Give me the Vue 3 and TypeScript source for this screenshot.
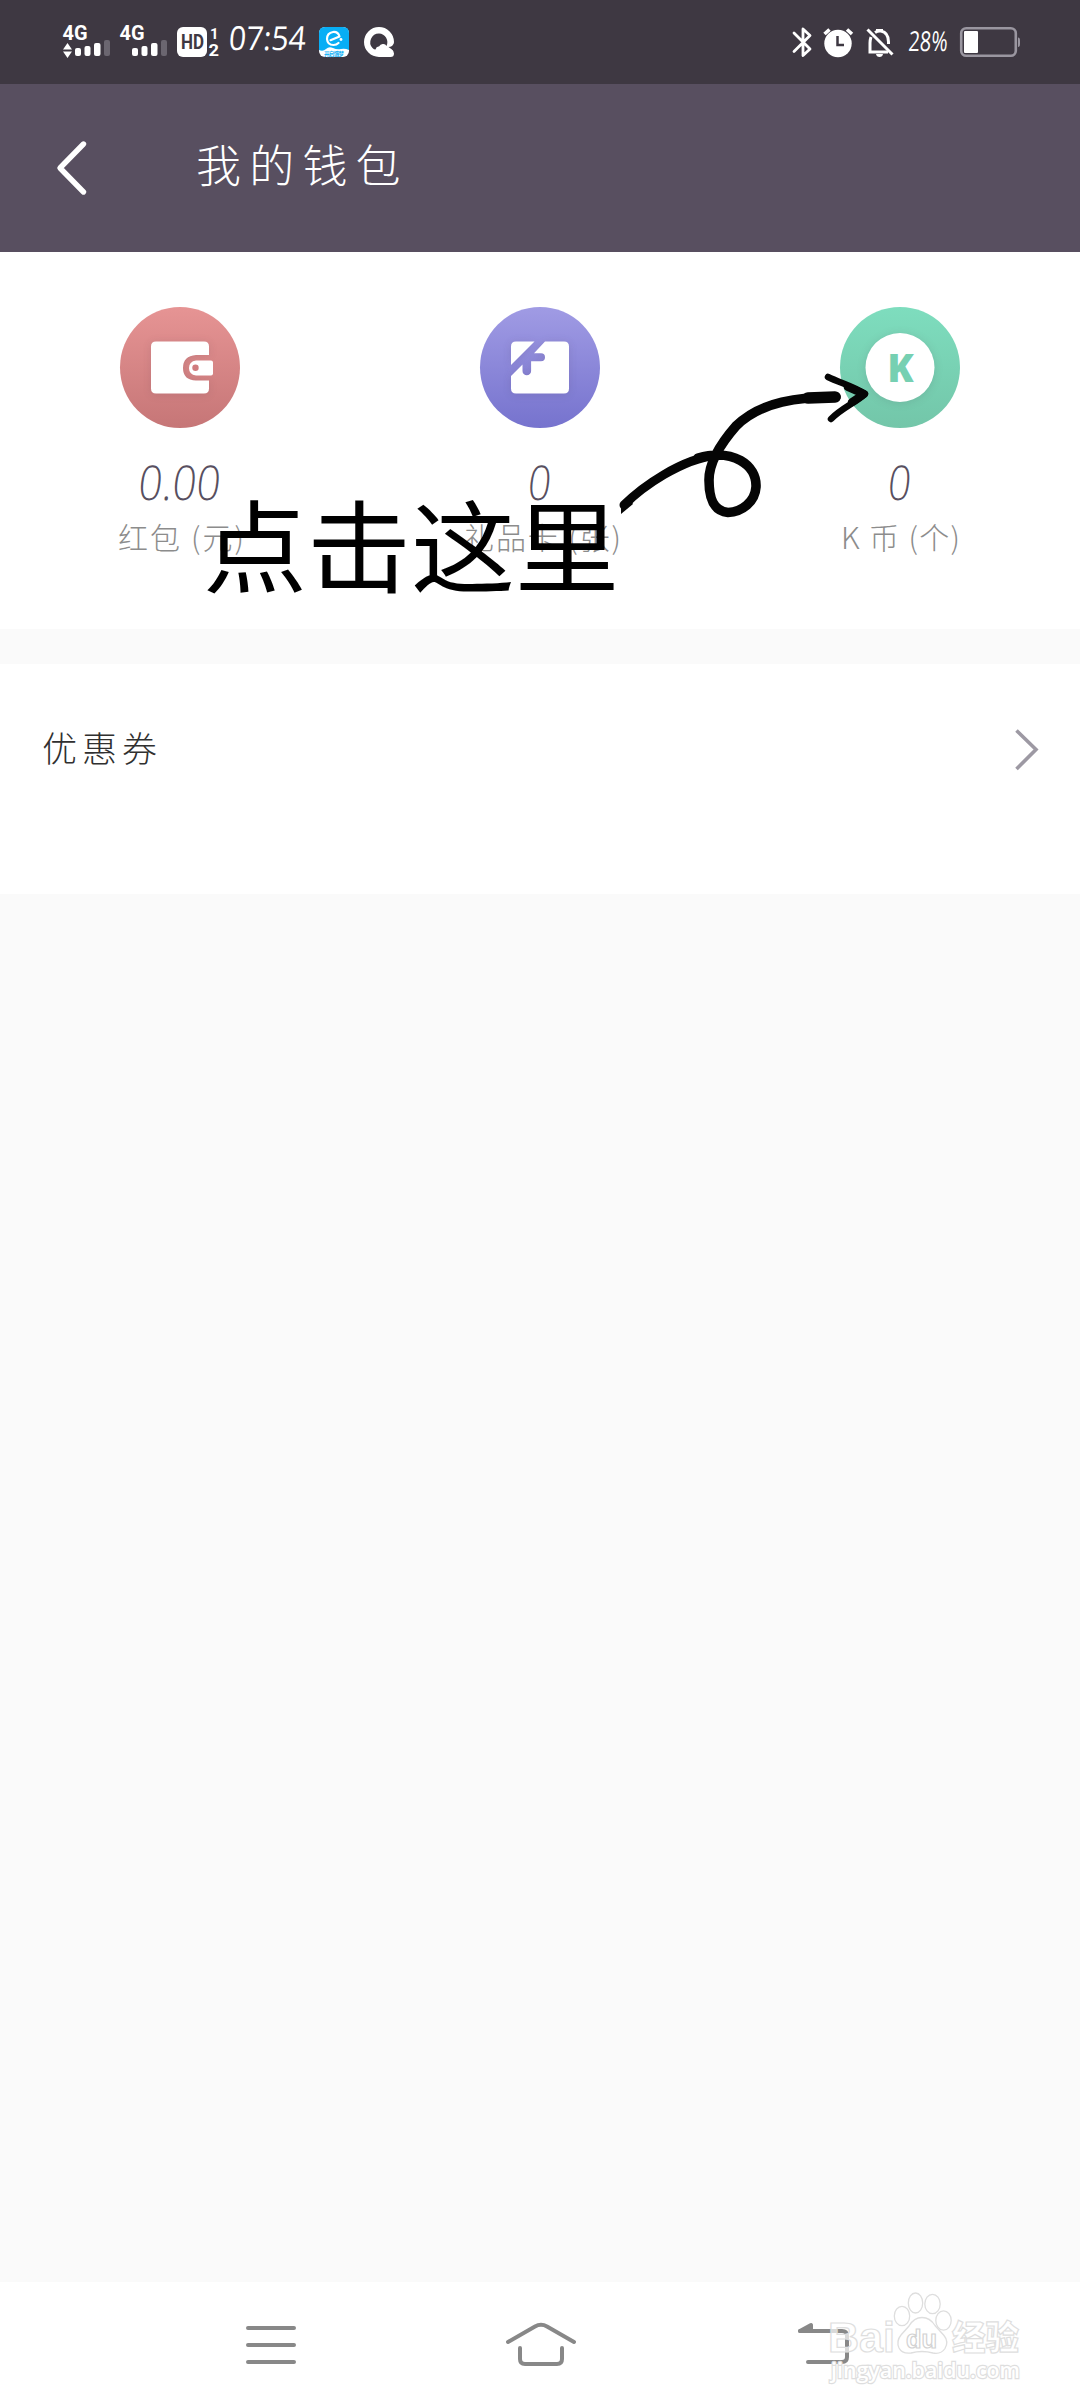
<script setup lang="ts">
interface Asset {
  kind: 'wallet' | 'card' | 'coin'
  value: string
  label: string
  valueWidth: number
  labelX: number
  labelWidth: number
}

const assets: Asset[] = [
  { kind: 'wallet', value: '0.00', label: '红包 (元)', valueWidth: 82, labelX: 28, labelWidth: 126 },
  { kind: 'card', value: '0', label: '礼品卡 (张)', valueWidth: 23, labelX: 14, labelWidth: 157 },
  { kind: 'coin', value: '0', label: 'K 币 (个)', valueWidth: 23, labelX: 31, labelWidth: 119 },
]
</script>

<template>
  <div class="screen">
    <div class="status">
      <svg class="signals" width="320" height="84" viewBox="40 0 320 84">
        <g fill="#fff" class="tiny">
          <text x="62.5" y="40" font-size="19.5" textLength="25" lengthAdjust="spacingAndGlyphs">4G</text>
          <text x="119.5" y="40" font-size="19.5" textLength="25" lengthAdjust="spacingAndGlyphs">4G</text>
          <path d="M63 49.500l4.500-6.500 4.500 6.500zM63 51.500h9l-4.500 6.500z" />
          <rect x="75" y="48" width="6" height="8" rx="2" />
          <rect x="84.500" y="46" width="6" height="10" rx="2" />
          <rect x="94" y="43" width="6.500" height="13" rx="2" />
          <rect x="104" y="40" width="6" height="16" rx="2" fill="#6b6670" />
          <rect x="132" y="48" width="6" height="8" rx="2" />
          <rect x="141.500" y="46" width="6" height="10" rx="2" />
          <rect x="151" y="43" width="6.500" height="13" rx="2" />
          <rect x="161" y="40" width="6" height="16" rx="2" fill="#6b6670" />
          <rect x="177" y="27" width="30" height="30" rx="6" />
          <text x="181" y="49.300" font-size="20" fill="#3e3842" textLength="23" lengthAdjust="spacingAndGlyphs">HD</text>
          <text x="210" y="38.500" font-size="15" textLength="8">1</text>
          <text x="208.500" y="56" font-size="17" textLength="10.500" lengthAdjust="spacingAndGlyphs">2</text>
        </g>
        <text class="hand" transform="translate(228 50) skewX(-5)" x="0" y="0" font-size="33" fill="#fff" textLength="77" lengthAdjust="spacingAndGlyphs">07:54</text>
        <rect x="319" y="27" width="30" height="30" rx="6" fill="#fff" />
        <path d="M319 50V33q0-6 6-6h18q6 0 6 6v17q-4-2-8-1t-8-1-7 1-7 1z" fill="#08aef5" />
        <path d="M330.500 40.200l9-3.700q-1.500-5-6.500-4.500-6 1-6 7 .500 6 6.500 6 3 0 5-2" fill="none" stroke="#fff" stroke-width="2.200" stroke-linecap="round" stroke-linejoin="round" />
        <circle cx="341" cy="39.500" r="1.400" fill="#fff" />
        <text class="cjk" x="324" y="55.500" font-size="5.500" font-weight="700" fill="#08aef5" textLength="20">开启饿梦</text>
      </svg>
      <svg width="30" height="30" viewBox="0 0 30 30" class="browser">
        <path fill="#fff" d="M15 0a15 15 0 0 0 0 30h11.500a3.500 3.500 0 0 0 3.500-3.500q0-2-2-4.500A15 15 0 0 0 30 15 15 15 0 0 0 15 0z" />
        <path fill="#3e3842" d="M15 6.500a8.700 8.700 0 0 0-6.500 14.500q1.500 1.500 3 1.500 1-3.500 3.500-3 1.500-3 4.500-2.500 2 .200 3 2A8.700 8.700 0 0 0 15 6.500zM30 16.500v7.500l-5.500-4q2 0 3.500-1z" />
      </svg>
      <svg class="right" width="240" height="84" viewBox="790 0 240 84">
        <path d="M794 33l16 16-7 6.500V29l7 6.500-16 16" fill="none" stroke="#fff" stroke-width="2.800" stroke-linejoin="round" stroke-linecap="round" />
        <circle cx="838" cy="43.500" r="13.700" fill="#fff" />
        <path d="M837.500 36v9h6.500" fill="none" stroke="#3e3842" stroke-width="2.500" />
        <path d="M824.500 34l5-4.500M852 34l-5-4.500" stroke="#fff" stroke-width="3.600" />
        <g fill="none" stroke="#fff" stroke-width="3">
          <path d="M867.500 29.500l25 25" />
          <path d="M875 32.500q3-2 6-1.500 7.500 1.500 7.500 11v2M871 37q-1 3-1 6v9h18" />
          <path d="M876 30.500h7" />
        </g>
        <path d="M876 54h7q-.500 3-3.500 3t-3.500-3z" fill="#fff" />
        <text class="hand" transform="translate(908 50.500) skewX(-4)" x="0" y="0" font-size="27.500" fill="#fff" textLength="39" lengthAdjust="spacingAndGlyphs">28%</text>
        <rect x="961.200" y="28.200" width="54.600" height="27.600" rx="5" fill="none" stroke="#9a96a0" stroke-width="2.600" />
        <rect x="964" y="31" width="14" height="22" rx="1" fill="#fff" />
        <path d="M1018 37.500q2 0 2 3v3.500q0 3-2 3z" fill="#9a96a0" />
      </svg>
    </div>

    <header class="header">
      <svg width="34" height="56" viewBox="0 0 34 56">
        <path d="M29.500 4L6 28l23.500 24" fill="none" stroke="#fff" stroke-width="5.400" stroke-linecap="round" stroke-linejoin="round" />
      </svg>
      <h1>我的钱包</h1>
    </header>

    <section class="assets">
      <div v-for="a in assets" :key="a.kind" class="asset">
        <svg v-if="a.kind === 'wallet'" class="badge" viewBox="0 0 120 121">
          <defs>
            <linearGradient id="red" x2="0" y2="1"><stop stop-color="#e69494" /><stop offset="1" stop-color="#c67677" /></linearGradient>
          </defs>
          <ellipse cx="60" cy="60.500" rx="60" ry="60.500" fill="url(#red)" />
          <path class="lift" d="M36 34.500h48q5 0 5 5v8.500H76q-13 1-13 13t13 12.500h13v8q0 5-5 5H36q-5 0-5-5v-42q0-5 5-5z" fill="#fff" />
          <path d="M76 53.500h15q2 0 2 2v11q0 2-2 2H76q-7-1-7-7.500t7-7.500z" fill="#fff" />
          <circle cx="75.500" cy="60.800" r="3.200" fill="#d07c7e" />
        </svg>
        <svg v-else-if="a.kind === 'card'" class="badge" viewBox="0 0 120 121">
          <defs>
            <linearGradient id="violet" x2="0" y2="1"><stop stop-color="#a09be4" /><stop offset="1" stop-color="#7673ce" /></linearGradient>
          </defs>
          <ellipse cx="60" cy="60.500" rx="60" ry="60.500" fill="url(#violet)" />
          <path class="lift" d="M36 34.500h18.500L31 58V39.500q0-5 5-5zM65 34.500h19q5 0 5 5v42q0 5-5 5H36q-5 0-5-5V69l11.500-11.500V64a4.300 4.300 0 0 0 8.600 0V54.300H61a4 4 0 0 0 0-8h-7z" fill="#fff" />
        </svg>
        <svg v-else class="badge" viewBox="0 0 120 121">
          <defs>
            <linearGradient id="green" x2="0" y2="1"><stop stop-color="#7eddbe" /><stop offset="1" stop-color="#73c6a9" /></linearGradient>
          </defs>
          <ellipse cx="60" cy="60.500" rx="60" ry="60.500" fill="url(#green)" />
          <circle class="lift" cx="60" cy="60.500" r="34.500" fill="#fff" />
          <text x="47.200" y="75" font-family="Open Sans, sans-serif" font-weight="800" font-size="38" fill="#76d0b2" textLength="26.500" lengthAdjust="spacingAndGlyphs">K</text>
        </svg>
        <svg class="value" width="160" height="40" viewBox="0 0 160 40">
          <text class="num" :transform="`translate(${78 - a.valueWidth / 2} 37) skewX(-6)`" x="0" y="0" :textLength="a.valueWidth" lengthAdjust="spacingAndGlyphs">{{ a.value }}</text>
        </svg>
        <svg class="label" width="180" height="44" viewBox="0 0 180 44">
          <text :x="a.labelX" y="34" :textLength="a.labelWidth">{{ a.label }}</text>
        </svg>
      </div>
    </section>

    <section class="coupon">
      <span>优惠券</span>
      <svg width="26" height="44" viewBox="0 0 26 44">
        <path d="M2.500 2.500L22 21.500 2.500 41" fill="none" stroke="#9d99a3" stroke-width="3.600" />
      </svg>
    </section>

    <main class="blank"></main>

    <nav class="nav">
      <svg width="1080" height="126" viewBox="0 2282 1080 126" fill="none" stroke="#888" stroke-width="4" stroke-linecap="round" stroke-linejoin="round">
        <path d="M248 2328h46M248 2345h46M248 2362h46" />
        <path d="M508 2342l27-15.500q6-3.500 12 0l27 15.500M520 2348v11q0 5 5 5h32q5 0 5-5v-11" />
        <path d="M800 2331h42q5 0 5 5v21q0 5-5 5h-34" />
        <path d="M800 2331l11-6v6z" fill="#888" />
      </svg>
    </nav>

    <div class="callout">点击这里</div>
    <svg class="arrow" width="270" height="160" viewBox="610 365 270 160">
      <g fill="none" stroke="#050505" stroke-linecap="round" stroke-linejoin="round">
        <path d="M624 505C642 487 681 459 717 455" stroke-width="9" />
        <path d="M698 458C733 448 757 465 756 487C755 502 742 512 728 512.500C713 511 709 498 709 480C709 461 722 442 736 426C761 401 800 397 836 397" stroke-width="9.600" />
        <path d="M828 377C840 383 853 386 865 394C855 403 842 408 831 419" stroke-width="6.500" />
        <path d="M848 387l16 7-12 8" stroke-width="8" />
        <path d="M808 398l27-1" stroke-width="11.500" />
      </g>
      <path d="M621 504v10l12-10-4-6z" fill="#050505" />
    </svg>

    <svg class="watermark" width="220" height="110" viewBox="815 2280 220 110">
      <g fill="#fff" fill-opacity=".7" stroke="#dedede" stroke-width="1.300">
        <ellipse cx="902" cy="2316" rx="7.700" ry="9.700" />
        <ellipse cx="915.500" cy="2303" rx="7.200" ry="10" />
        <ellipse cx="932.500" cy="2304" rx="7.700" ry="9.700" />
        <ellipse cx="943.500" cy="2320.500" rx="7.700" ry="9.700" />
        <path d="M922 2317.500q8 0 13 8l9 10q5 6 1 13-4 6-12 4.500-11-3-22 0-9 1-12-5-3-7 2-13l8-9q5-8.500 13-8.500z" />
        <g stroke-width="1.200">
          <text x="828" y="2352" font-family="Liberation Sans, sans-serif" font-weight="700" font-size="43" textLength="67" lengthAdjust="spacingAndGlyphs">Bai</text>
          <text x="906" y="2348" font-family="Liberation Sans, sans-serif" font-weight="700" font-size="26" textLength="31" lengthAdjust="spacingAndGlyphs" stroke="#d2d2d2">du</text>
          <text class="cjk" x="952" y="2349.500" font-weight="900" font-size="34" textLength="67" lengthAdjust="spacingAndGlyphs">经验</text>
          <text x="831" y="2378" font-family="Open Sans, sans-serif" font-weight="600" font-size="22" textLength="189" lengthAdjust="spacingAndGlyphs" paint-order="stroke" stroke-width="2.400" fill-opacity="1">jingyan.baidu.com</text>
        </g>
      </g>
    </svg>
  </div>
</template>

<style>
body {
  margin: 0;
  background: #fafafa;
}
</style>

<style scoped>
.screen {
  position: relative;
  display: flex;
  flex-direction: column;
  width: 1080px;
  height: 2408px;
  overflow: hidden;
  background: #fafafa;
  font-family: "Noto Sans CJK SC", sans-serif;
}
.screen svg {
  display: block;
  flex: none;
  overflow: visible;
}
.status {
  display: flex;
  align-items: center;
  height: 84px;
  padding: 0 50px 0 40px;
  background: #3e3842;
}
.browser {
  margin-left: 4px;
}
.right {
  margin-left: auto;
}
.tiny {
  font-family: Roboto, sans-serif;
  font-weight: 700;
}
.hand {
  font-family: "Open Sans", sans-serif;
  font-weight: 400;
}
.cjk {
  font-family: "Noto Sans CJK SC", sans-serif;
}
.header {
  display: flex;
  align-items: center;
  height: 168px;
  padding-left: 54px;
  background: #584f60;
}
.header h1 {
  margin: 0 0 8px 108px;
  color: #fff;
  font-size: 45px;
  line-height: 60px;
  font-weight: 300;
  letter-spacing: 8.2px;
}
.assets {
  display: flex;
  height: 377px;
  background: #fff;
}
.asset {
  display: flex;
  flex: 1;
  flex-direction: column;
  align-items: center;
  padding-top: 55px;
}
.badge {
  width: 120px;
  height: 121px;
}
.lift {
  filter: drop-shadow(0 1px 4px rgba(60, 30, 60, 0.12));
}
.value {
  margin-top: 35px;
}
.num {
  font-family: "Open Sans", sans-serif;
  font-weight: 300;
  font-size: 48px;
  fill: #584f60;
}
.label {
  margin-top: 12px;
  font-size: 30px;
  font-weight: 200;
  fill: #8c8c8c;
}
.coupon {
  display: flex;
  align-items: flex-start;
  justify-content: space-between;
  box-sizing: border-box;
  height: 230px;
  margin-top: 35px;
  padding: 64px 40px 0 42px;
  background: #fff;
  color: #303030;
}
.coupon span {
  margin-top: -2px;
  font-size: 35px;
  line-height: 42px;
  font-weight: 300;
  letter-spacing: 5px;
}
.blank {
  flex: 1;
}
.nav {
  height: 126px;
  background: #fff;
}
.callout {
  position: absolute;
  left: 203px;
  top: 482px;
  color: #000;
  font-size: 104px;
  line-height: 120px;
  white-space: nowrap;
  transform: scaleY(0.96);
}
.arrow {
  position: absolute;
  left: 610px;
  top: 365px;
}
.watermark {
  position: absolute;
  left: 815px;
  top: 2280px;
}
</style>
